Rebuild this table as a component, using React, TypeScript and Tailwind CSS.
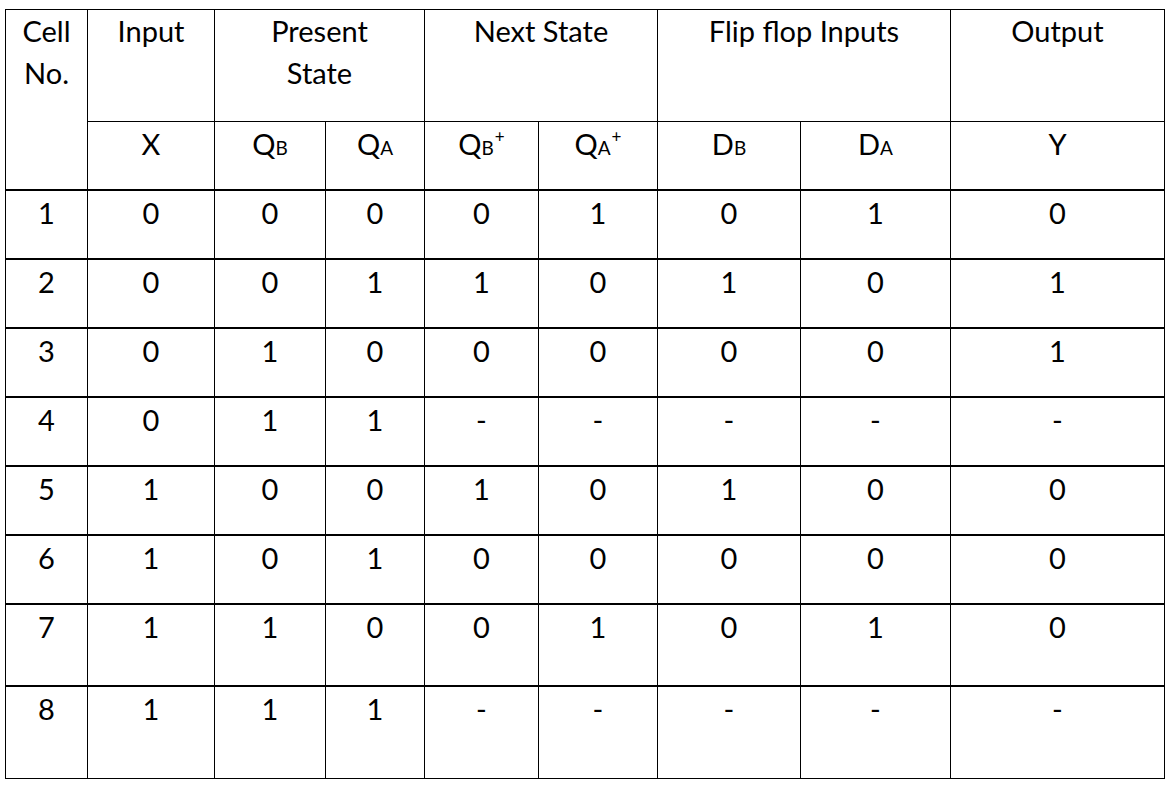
import React from "react";

const rows: string[][] = [
  ["1", "0", "0", "0", "0", "1", "0", "1", "0"],
  ["2", "0", "0", "1", "1", "0", "1", "0", "1"],
  ["3", "0", "1", "0", "0", "0", "0", "0", "1"],
  ["4", "0", "1", "1", "-", "-", "-", "-", "-"],
  ["5", "1", "0", "0", "1", "0", "1", "0", "0"],
  ["6", "1", "0", "1", "0", "0", "0", "0", "0"],
  ["7", "1", "1", "0", "0", "1", "0", "1", "0"],
  ["8", "1", "1", "1", "-", "-", "-", "-", "-"],
];

function Sub({ base, sub, plus }: { base: string; sub: string; plus?: boolean }) {
  return (
    <span>
      {base}
      <span className="text-[19px]">{sub}</span>
      {plus && <span className="relative -top-[12px] ml-[1px] text-[17px]">+</span>}
    </span>
  );
}

export default function App() {
  const cell = "border-r border-black text-center pt-[1px]";
  return (
    <div className="bg-white w-[1174px] h-[788px] text-black" style={{ fontFamily: "Lato, 'Open Sans', sans-serif" }}>
      <div className="pt-[9px] pl-[5px]">
        <div
          className="grid border-l border-t border-black text-[29px] leading-[42px] w-[1160px]"
          style={{
            gridTemplateColumns: "82px 127px 111px 99px 114px 119px 143px 150px 214px",
            gridTemplateRows: "112px 69px 69px 69px 69px 69px 69px 69px 82px 92px",
          }}
        >
          <div className={`${cell} row-span-2 border-b-2 !pt-0`}>
            Cell
            <br />
            No.
          </div>
          <div className={`${cell} border-b !pt-0`}>Input</div>
          <div className={`${cell} col-span-2 border-b !pt-0`}>
            Present
            <br />
            State
          </div>
          <div className={`${cell} col-span-2 border-b !pt-0`}>Next State</div>
          <div className={`${cell} col-span-2 border-b !pt-0`}>Flip flop Inputs</div>
          <div className={`${cell} border-b !pt-0`}>Output</div>

          <div className={`${cell} border-b-2`}>X</div>
          <div className={`${cell} border-b-2`}>
            <Sub base="Q" sub="B" />
          </div>
          <div className={`${cell} border-b-2`}>
            <Sub base="Q" sub="A" />
          </div>
          <div className={`${cell} border-b-2`}>
            <Sub base="Q" sub="B" plus />
          </div>
          <div className={`${cell} border-b-2`}>
            <Sub base="Q" sub="A" plus />
          </div>
          <div className={`${cell} border-b-2`}>
            <Sub base="D" sub="B" />
          </div>
          <div className={`${cell} border-b-2`}>
            <Sub base="D" sub="A" />
          </div>
          <div className={`${cell} border-b-2`}>Y</div>

          {rows.map((r, i) =>
            r.map((v, j) => (
              <div key={`${i}-${j}`} className={`${cell} ${i === rows.length - 1 ? "border-b" : "border-b-2"}`}>
                {v}
              </div>
            ))
          )}
        </div>
      </div>
    </div>
  );
}
